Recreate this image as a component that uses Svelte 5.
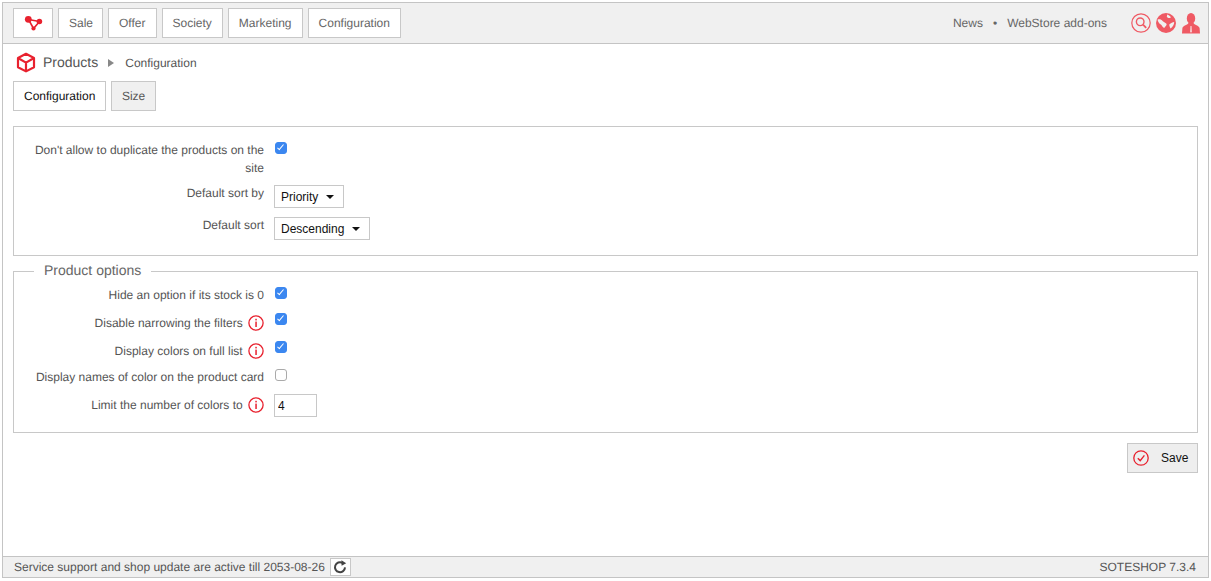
<script>
	const NAV = ['Sale', 'Offer', 'Society', 'Marketing', 'Configuration'];

	const OPTIONS = [
		{ label: 'Hide an option if its stock is 0', checked: true, info: false, wide: true },
		{ label: 'Disable narrowing the filters', checked: true, info: true, wide: true },
		{ label: 'Display colors on full list', checked: true, info: true, wide: false },
		{ label: 'Display names of color on the product card', checked: false, info: false, wide: false }
	];
</script>

{#snippet info()}
	<svg class="info" viewBox="0 0 16 16" aria-hidden="true">
		<circle cx="8" cy="8" r="7.1" fill="none" stroke="#e8212e" stroke-width="1.3" />
		<rect x="7.3" y="6.6" width="1.5" height="5.4" fill="#e8212e" />
		<rect x="7.3" y="3.8" width="1.5" height="1.6" fill="#e8212e" />
	</svg>
{/snippet}

<div class="frame">
	<header class="topbar">
		<a class="btn logo" href="#top" aria-label="Home">
			<svg width="20" height="18" viewBox="0 0 20 18">
				<path d="M5.5 5.5 L16.5 7.5 L10.5 14.5 Z" stroke="#e8212e" stroke-width="1.6" fill="none" />
				<circle cx="5.3" cy="5.3" r="3.4" fill="#e8212e" />
				<circle cx="16.4" cy="7.5" r="2.8" fill="#e8212e" />
				<circle cx="10.5" cy="14.5" r="2.1" fill="#e8212e" />
			</svg>
		</a>
		{#each NAV as item}
			<a class="btn" href="#top">{item}</a>
		{/each}
		<div class="links">
			<span>News</span>
			<span>•</span>
			<span>WebStore add-ons</span>
		</div>
		<div class="tools">
			<svg width="20" height="20" viewBox="0 0 20 20" aria-label="Search">
				<circle cx="10" cy="10" r="9.2" fill="none" stroke="#ef5a64" stroke-width="1.2" />
				<circle cx="9.2" cy="8.8" r="3.8" fill="none" stroke="#ef5a64" stroke-width="1.4" />
				<path d="M12 11.6 L15.2 14.8" stroke="#ef5a64" stroke-width="1.8" />
			</svg>
			<svg width="20" height="20" viewBox="0 0 20 20" aria-label="Language">
				<circle cx="10" cy="10" r="10" fill="#ef5a64" />
				<path d="M1.6 6.4 C3.6 5.8 5.6 6.4 6.6 8 C7.6 9.4 10 9.6 10.6 11 C11 12.4 9 13.4 8.2 15 C6.4 14.4 6 12 4.4 11.2 C3 10.4 1.8 8.4 1.6 6.4 Z M11.2 1.4 C12.6 2.2 14.8 2.8 14.8 4.4 C13.6 5.6 11.8 5.2 10.8 3.8 Z M13.4 11.2 C15 10.2 16.6 9 18.2 9 C18.2 11.6 16.6 14.2 14.6 15.4 C13.8 14 13 12.6 13.4 11.2 Z" fill="#f0f0f0" />
			</svg>
			<svg width="20" height="21" viewBox="0 0 20 21" aria-label="Account">
				<ellipse cx="10" cy="5.4" rx="4.2" ry="5.4" fill="#ef5a64" />
				<path d="M7.4 10 L12.6 10 C13 12.2 18 12.4 18.6 15 L19 20.6 L1 20.6 L1.4 15 C2 12.4 7 12.2 7.4 10 Z" fill="#ef5a64" />
				<path d="M9.4 13 L10.6 13 L11 18.6 L10 20 L9 18.6 Z" fill="#f7c9cc" />
			</svg>
		</div>
	</header>

	<main class="content">
		<div class="crumbs">
			<svg width="20" height="21" viewBox="0 0 20 21" aria-hidden="true">
				<path d="M10 1.8 L18 6 L18 15.2 L10 19.4 L2 15.2 L2 6 Z M2.4 6.2 L10 10.6 L17.6 6.2 M10 10.6 L10 19" fill="none" stroke="#e8212e" stroke-width="2.2" stroke-linejoin="round" />
			</svg>
			<span class="crumb-main">Products</span>
			<span class="crumb-sep"></span>
			<span>Configuration</span>
		</div>

		<div class="tabs">
			<a class="tab active" href="#top">Configuration</a>
			<a class="tab" href="#top">Size</a>
		</div>

		<fieldset class="group first">
			<div class="row head">
				<div class="label">Don't allow to duplicate the products on the site</div>
				<input class="check" type="checkbox" checked />
			</div>
			<div class="row">
				<div class="label raised">Default sort by</div>
				<button class="select">Priority<i class="caret"></i></button>
			</div>
			<div class="row last">
				<div class="label raised">Default sort</div>
				<button class="select">Descending<i class="caret"></i></button>
			</div>
		</fieldset>

		<fieldset class="group second">
			<legend>Product options</legend>
			{#each OPTIONS as o}
				<div class="row tight" class:wide={o.wide}>
					<div class="label">
						{o.label}
						{#if o.info}{@render info()}{/if}
					</div>
					<input class="check" class:up={o.info} type="checkbox" checked={o.checked} />
				</div>
			{/each}
			<div class="row last">
				<div class="label lower">Limit the number of colors to {@render info()}</div>
				<input class="num" type="text" value="4" />
			</div>
		</fieldset>

		<div class="actions">
			<button class="save">
				<svg width="16" height="16" viewBox="0 0 16 16" aria-hidden="true">
					<circle cx="8" cy="8" r="7.2" fill="none" stroke="#e8212e" stroke-width="1.3" />
					<path d="M4.8 8.2 L7.2 10.6 L11.4 5.4" fill="none" stroke="#e8212e" stroke-width="1.4" />
				</svg>
				<span>Save</span>
			</button>
		</div>
	</main>

	<footer class="footer">
		<span>Service support and shop update are active till 2053-08-26</span>
		<button class="refresh" aria-label="Refresh">
			<svg width="14" height="14" viewBox="0 0 14 14">
				<path d="M12 7.4 A5 5 0 1 1 9.4 2.8" fill="none" stroke="#444" stroke-width="2" />
				<path d="M8.4 0.2 L13.2 3.2 L8.6 5.8 Z" fill="#444" />
			</svg>
		</button>
		<span class="version">SOTESHOP 7.3.4</span>
	</footer>
</div>

<style>
:global(body) { background:#fff; }
.frame { box-sizing:border-box; width:1207px; height:576px; margin:2px 0 0 2px; border:1px solid #c4c4c4; display:flex; flex-direction:column; font:12px/18px "Liberation Sans", Arial, sans-serif; color:#555; text-rendering:geometricPrecision; }
.topbar { box-sizing:border-box; height:41px; flex:none; display:flex; align-items:center; gap:5px; padding:0 10px; background:#f0f0f0; border-bottom:1px solid #c4c4c4; }
.btn { box-sizing:border-box; height:30px; display:flex; align-items:center; padding:0 10px; background:#fff; border:1px solid #c8c8c8; color:#666; text-decoration:none; }
.btn:nth-child(2) { padding-right:9px; }
.logo { width:40px; justify-content:center; padding:0; }
.links { margin-left:auto; display:flex; gap:10px; color:#666; }
.tools { display:flex; align-items:center; gap:5px; margin:0 -3px 0 19px; }
.content { flex:1; padding:0 10px; }
.crumbs { display:flex; align-items:center; height:21px; margin-top:8px; padding-left:3px; }
.crumb-main { font-size:14px; margin:0 0 2px 7px; }
.crumb-sep { width:0; height:0; margin:1px 11px 0 10px; border-left:6px solid #888; border-top:4px solid transparent; border-bottom:4px solid transparent; }
.tabs { display:flex; gap:5px; margin-top:8px; }
.tab { box-sizing:border-box; height:30px; padding:0 9.5px 0 10px; display:flex; align-items:center; background:#f0f0f0; border:1px solid #c8c8c8; color:#555; text-decoration:none; }
.tab.active { background:#fff; color:#111; }
.group { margin:0; min-width:0; border:1px solid #c8c8c8; }
.first { margin-top:15px; padding:14px 0 15px; }
.second { margin-top:6px; padding:6px 0 15px; }
legend { margin-left:20px; padding:0 10px 2px; font-size:14px; line-height:16px; color:#666; }
.row { display:flex; align-items:flex-start; gap:10px; margin-bottom:9px; }
.row.head { margin-bottom:8px; }
.row.tight { margin-bottom:8px; }
.row.wide { margin-bottom:10px; }
.row.last { margin:0; }
.label { box-sizing:border-box; width:250px; flex:none; text-align:right; }
.label.lower { padding-top:2px; }
.label.raised { margin-top:-1px; }
.info { width:16px; height:16px; vertical-align:-4px; margin-left:2px; }
.check { appearance:none; box-sizing:border-box; width:12px; height:12px; margin:1px 0 0 1px; border:1px solid #aaa; border-radius:3px; background:#fff; position:relative; }
.check.up { margin-top:-1px; }
.check:checked { background:#3b87f0; border-color:#3b87f0; }
.check:checked::after { content:""; position:absolute; left:3px; top:0; width:3px; height:7px; border:solid #fff; border-width:0 1.6px 1.6px 0; transform:rotate(40deg); box-sizing:border-box; }
.select { box-sizing:border-box; height:23px; padding:0 6px; display:flex; align-items:center; background:#fff; border:1px solid #c8c8c8; border-radius:0; font:inherit; color:#111; }
.caret { width:0; height:0; margin-left:8px; margin-right:3px; border-top:4px solid #111; border-left:4px solid transparent; border-right:4px solid transparent; }
.num { box-sizing:border-box; width:43px; height:23px; padding:0 3px; border:1px solid #c8c8c8; border-radius:0; font:inherit; color:#111; outline:none; }
.actions { display:flex; justify-content:flex-end; margin-top:10px; }
.save { box-sizing:border-box; width:71px; height:30px; display:flex; align-items:center; padding:0 0 0 5px; background:#eee; border:1px solid #c8c8c8; border-radius:0; font:inherit; color:#111; }
.save span { margin-left:12px; }
.footer { box-sizing:border-box; height:21px; flex:none; display:flex; align-items:center; padding:0 12px 0 11px; background:#f0f0f0; border-top:1px solid #c4c4c4; }
.refresh { box-sizing:border-box; width:21px; height:18px; margin-left:5px; padding:0; display:flex; align-items:center; justify-content:center; background:#fff; border:1px solid #c8c8c8; border-radius:0; }
.version { margin-left:auto; }
</style>
